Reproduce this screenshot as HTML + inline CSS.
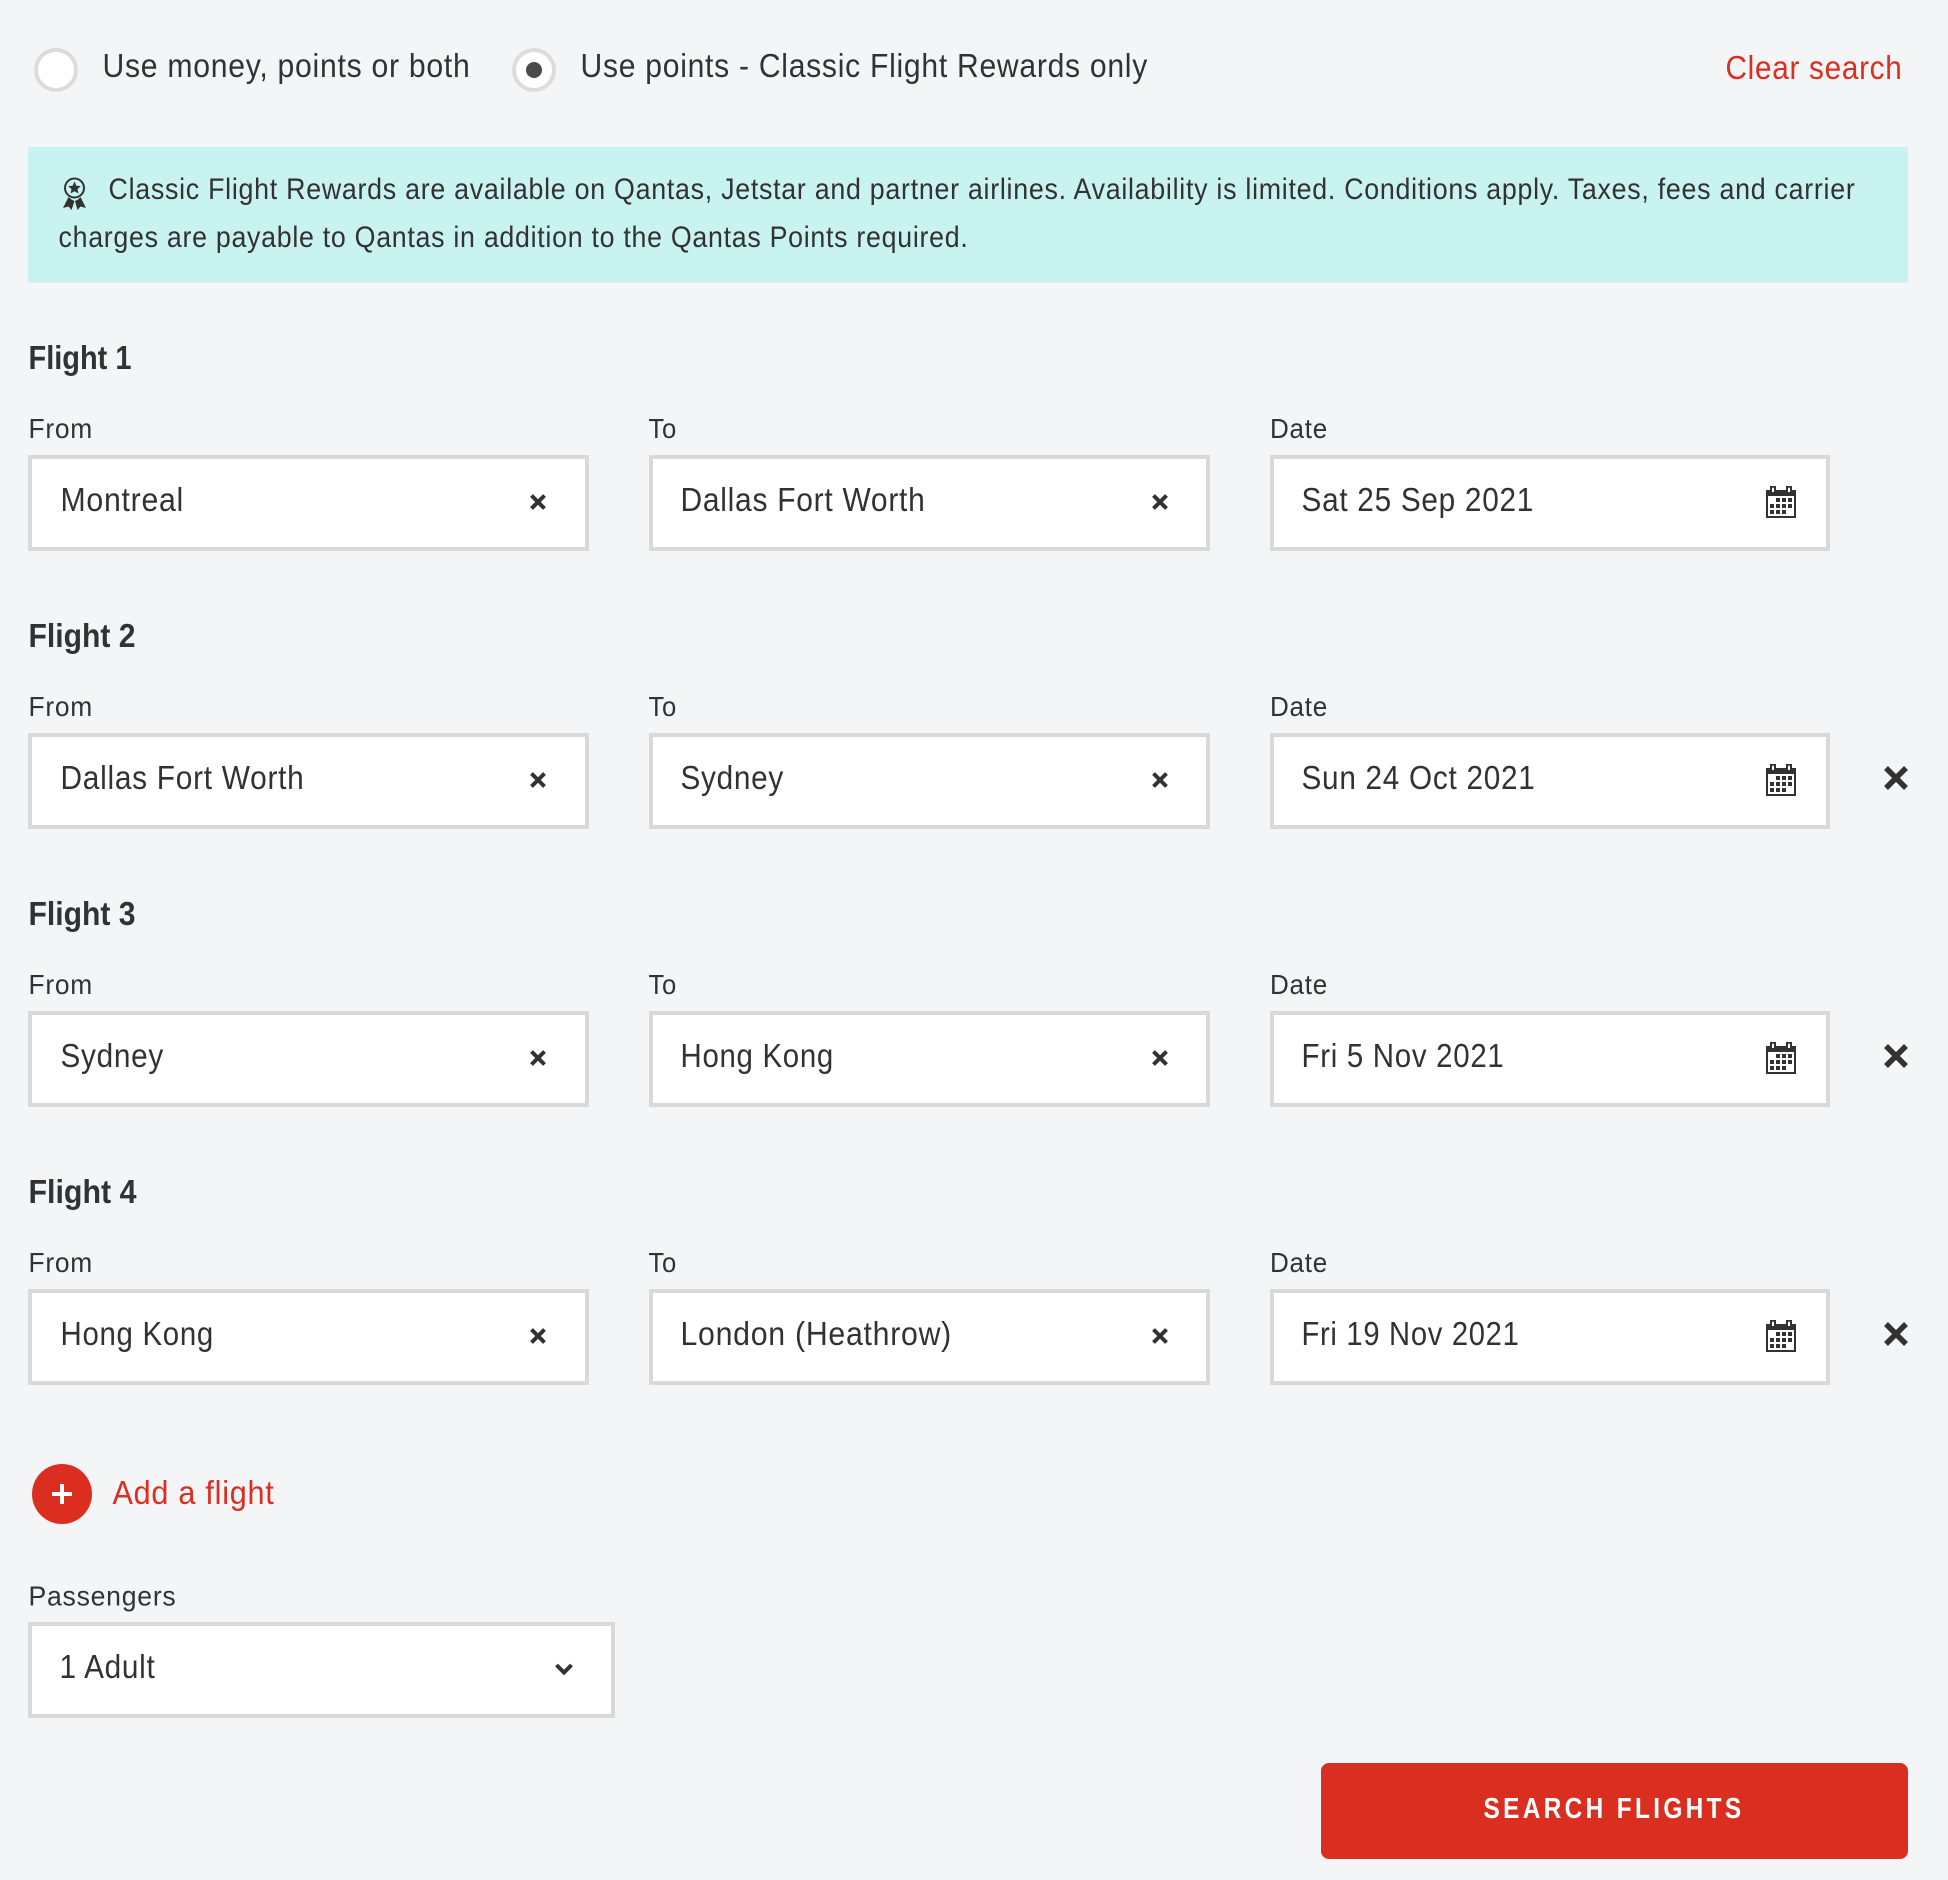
<!DOCTYPE html>
<html lang="en">
<head>
<meta charset="utf-8">
<title>Flight search</title>
<style>
html,body{margin:0;padding:0;background:#f4f5f7;width:1948px;height:1880px;overflow:hidden}
svg{display:block}
text{font-family:"Liberation Sans",sans-serif;fill:#323232;letter-spacing:.8px}
.v{font-size:33px}
.l{font-size:28px}
.h{font-size:33px;font-weight:bold;letter-spacing:0}
.r{fill:#dc2e20}
.b{fill:#fff;stroke:#d9d9d9;stroke-width:4}
</style>
</head>
<body>
<svg width="1948" height="1880" viewBox="0 0 1948 1880" xmlns="http://www.w3.org/2000/svg">
<defs>
<g id="cal">
<path fill="#323232" d="M4 0h6v4h10V0h6v4h4v28H0V4h4zM2 10v20h26V10zM6 1.800V6h2V1.800zM22 1.800V6h2V1.800z" fill-rule="evenodd"/>
<path fill="#323232" d="M10 12h4v4h-4zM16 12h4v4h-4zM22 12h4v4h-4zM4 18h4v4H4zM10 18h4v4h-4zM16 18h4v4h-4zM22 18h4v4h-4zM4 24h4v4H4zM10 24h4v4h-4zM16 24h4v4h-4z"/>
</g>
<path id="sx" d="M-6.500 -6.500L6.500 6.500M6.500 -6.500L-6.500 6.500" stroke="#323232" stroke-width="4" fill="none"/>
<path id="bx" d="M-10 -10L10 10M10 -10L-10 10" stroke="#323232" stroke-width="5.500" fill="none"/>
</defs>

<circle cx="56" cy="70" r="20" fill="#fff" stroke="#dcdcdc" stroke-width="4"/>
<text class="v" x="102.500" y="77" textLength="368" lengthAdjust="spacingAndGlyphs">Use money, points or both</text>
<circle cx="534" cy="70" r="20" fill="#fff" stroke="#dcdcdc" stroke-width="4"/>
<circle cx="534" cy="70" r="8" fill="#4a4a4a"/>
<text class="v" x="580.500" y="77" textLength="567.500" lengthAdjust="spacingAndGlyphs">Use points - Classic Flight Rewards only</text>
<text class="v r" x="1725.500" y="79" textLength="177" lengthAdjust="spacingAndGlyphs">Clear search</text>

<rect x="28" y="147" width="1880" height="136" fill="#c9f3f1"/>
<g fill="#323232">
<circle cx="74.500" cy="188" r="9.500" fill="none" stroke="#323232" stroke-width="2"/>
<path d="M74.500 181.500l1.900 4.200 4.400.400-3.300 3 1 4.400-4-2.300-4 2.300 1-4.400-3.300-3 4.400-.400z"/>
<path d="M68.500 197l-5.500 11 5.500-1.500 3 3.500 3-9-3-1.500zM80.500 197l5.500 11-5.500-1.500-3 3.500-2.500-9 3-1.500z"/>
</g>
<text x="108.500" y="199" font-size="29.500" textLength="1747" lengthAdjust="spacingAndGlyphs">Classic Flight Rewards are available on Qantas, Jetstar and partner airlines. Availability is limited. Conditions apply. Taxes, fees and carrier</text>
<text x="58.500" y="247" font-size="29.500" textLength="910" lengthAdjust="spacingAndGlyphs">charges are payable to Qantas in addition to the Qantas Points required.</text>

<!-- Flight 1 -->
<g>
<text class="h" x="28.500" y="369" textLength="103" lengthAdjust="spacingAndGlyphs">Flight 1</text>
<text class="l" x="28.500" y="438" textLength="64.500" lengthAdjust="spacingAndGlyphs">From</text>
<text class="l" x="648.500" y="438" textLength="28.500" lengthAdjust="spacingAndGlyphs">To</text>
<text class="l" x="1270" y="438" textLength="58" lengthAdjust="spacingAndGlyphs">Date</text>
<rect class="b" x="30" y="457" width="557" height="92"/>
<rect class="b" x="651" y="457" width="557" height="92"/>
<rect class="b" x="1272" y="457" width="556" height="92"/>
<text class="v" x="60.500" y="511" textLength="123.500" lengthAdjust="spacingAndGlyphs">Montreal</text>
<text class="v" x="680.500" y="511" textLength="245" lengthAdjust="spacingAndGlyphs">Dallas Fort Worth</text>
<text class="v" x="1301.500" y="511" textLength="232.500" lengthAdjust="spacingAndGlyphs">Sat 25 Sep 2021</text>
<use href="#sx" x="538" y="502"/>
<use href="#sx" x="1160" y="502"/>
<use href="#cal" x="1766" y="486"/>
</g>

<!-- Flight 2 -->
<g transform="translate(0,278)">
<text class="h" x="28.500" y="369" textLength="107" lengthAdjust="spacingAndGlyphs">Flight 2</text>
<text class="l" x="28.500" y="438" textLength="64.500" lengthAdjust="spacingAndGlyphs">From</text>
<text class="l" x="648.500" y="438" textLength="28.500" lengthAdjust="spacingAndGlyphs">To</text>
<text class="l" x="1270" y="438" textLength="58" lengthAdjust="spacingAndGlyphs">Date</text>
<rect class="b" x="30" y="457" width="557" height="92"/>
<rect class="b" x="651" y="457" width="557" height="92"/>
<rect class="b" x="1272" y="457" width="556" height="92"/>
<text class="v" x="60.500" y="511" textLength="244" lengthAdjust="spacingAndGlyphs">Dallas Fort Worth</text>
<text class="v" x="680.500" y="511" textLength="103.500" lengthAdjust="spacingAndGlyphs">Sydney</text>
<text class="v" x="1301.500" y="511" textLength="234" lengthAdjust="spacingAndGlyphs">Sun 24 Oct 2021</text>
<use href="#sx" x="538" y="502"/>
<use href="#sx" x="1160" y="502"/>
<use href="#cal" x="1766" y="486"/>
<use href="#bx" x="1896" y="500"/>
</g>

<!-- Flight 3 -->
<g transform="translate(0,556)">
<text class="h" x="28.500" y="369" textLength="107" lengthAdjust="spacingAndGlyphs">Flight 3</text>
<text class="l" x="28.500" y="438" textLength="64.500" lengthAdjust="spacingAndGlyphs">From</text>
<text class="l" x="648.500" y="438" textLength="28.500" lengthAdjust="spacingAndGlyphs">To</text>
<text class="l" x="1270" y="438" textLength="58" lengthAdjust="spacingAndGlyphs">Date</text>
<rect class="b" x="30" y="457" width="557" height="92"/>
<rect class="b" x="651" y="457" width="557" height="92"/>
<rect class="b" x="1272" y="457" width="556" height="92"/>
<text class="v" x="60.500" y="511" textLength="103.500" lengthAdjust="spacingAndGlyphs">Sydney</text>
<text class="v" x="680.500" y="511" textLength="153.500" lengthAdjust="spacingAndGlyphs">Hong Kong</text>
<text class="v" x="1301.500" y="511" textLength="203" lengthAdjust="spacingAndGlyphs">Fri 5 Nov 2021</text>
<use href="#sx" x="538" y="502"/>
<use href="#sx" x="1160" y="502"/>
<use href="#cal" x="1766" y="486"/>
<use href="#bx" x="1896" y="500"/>
</g>

<!-- Flight 4 -->
<g transform="translate(0,834)">
<text class="h" x="28.500" y="369" textLength="108" lengthAdjust="spacingAndGlyphs">Flight 4</text>
<text class="l" x="28.500" y="438" textLength="64.500" lengthAdjust="spacingAndGlyphs">From</text>
<text class="l" x="648.500" y="438" textLength="28.500" lengthAdjust="spacingAndGlyphs">To</text>
<text class="l" x="1270" y="438" textLength="58" lengthAdjust="spacingAndGlyphs">Date</text>
<rect class="b" x="30" y="457" width="557" height="92"/>
<rect class="b" x="651" y="457" width="557" height="92"/>
<rect class="b" x="1272" y="457" width="556" height="92"/>
<text class="v" x="60.500" y="511" textLength="153.500" lengthAdjust="spacingAndGlyphs">Hong Kong</text>
<text class="v" x="680.500" y="511" textLength="271.500" lengthAdjust="spacingAndGlyphs">London (Heathrow)</text>
<text class="v" x="1301.500" y="511" textLength="218" lengthAdjust="spacingAndGlyphs">Fri 19 Nov 2021</text>
<use href="#sx" x="538" y="502"/>
<use href="#sx" x="1160" y="502"/>
<use href="#cal" x="1766" y="486"/>
<use href="#bx" x="1896" y="500"/>
</g>

<circle cx="62" cy="1494" r="30" fill="#dc2e20"/>
<path d="M52 1494h20M62 1484v20" stroke="#fff" stroke-width="4" fill="none"/>
<text class="v r" x="112.500" y="1504" textLength="162" lengthAdjust="spacingAndGlyphs">Add a flight</text>

<text class="l" x="28.500" y="1605.500" textLength="148" lengthAdjust="spacingAndGlyphs">Passengers</text>
<rect class="b" x="30" y="1624" width="583" height="92"/>
<text class="v" x="59.500" y="1678" textLength="96" lengthAdjust="spacingAndGlyphs">1 Adult</text>
<path d="M556.500 1665l7.500 7.500 7.500-7.500" stroke="#323232" stroke-width="4" fill="none"/>

<rect x="1321" y="1763" width="587" height="96" rx="8" fill="#da2e20"/>
<text x="1483.500" y="1818" font-size="29" style="fill:#fff;letter-spacing:4px;font-weight:bold" textLength="261" lengthAdjust="spacingAndGlyphs">SEARCH FLIGHTS</text>
</svg>
</body>
</html>
